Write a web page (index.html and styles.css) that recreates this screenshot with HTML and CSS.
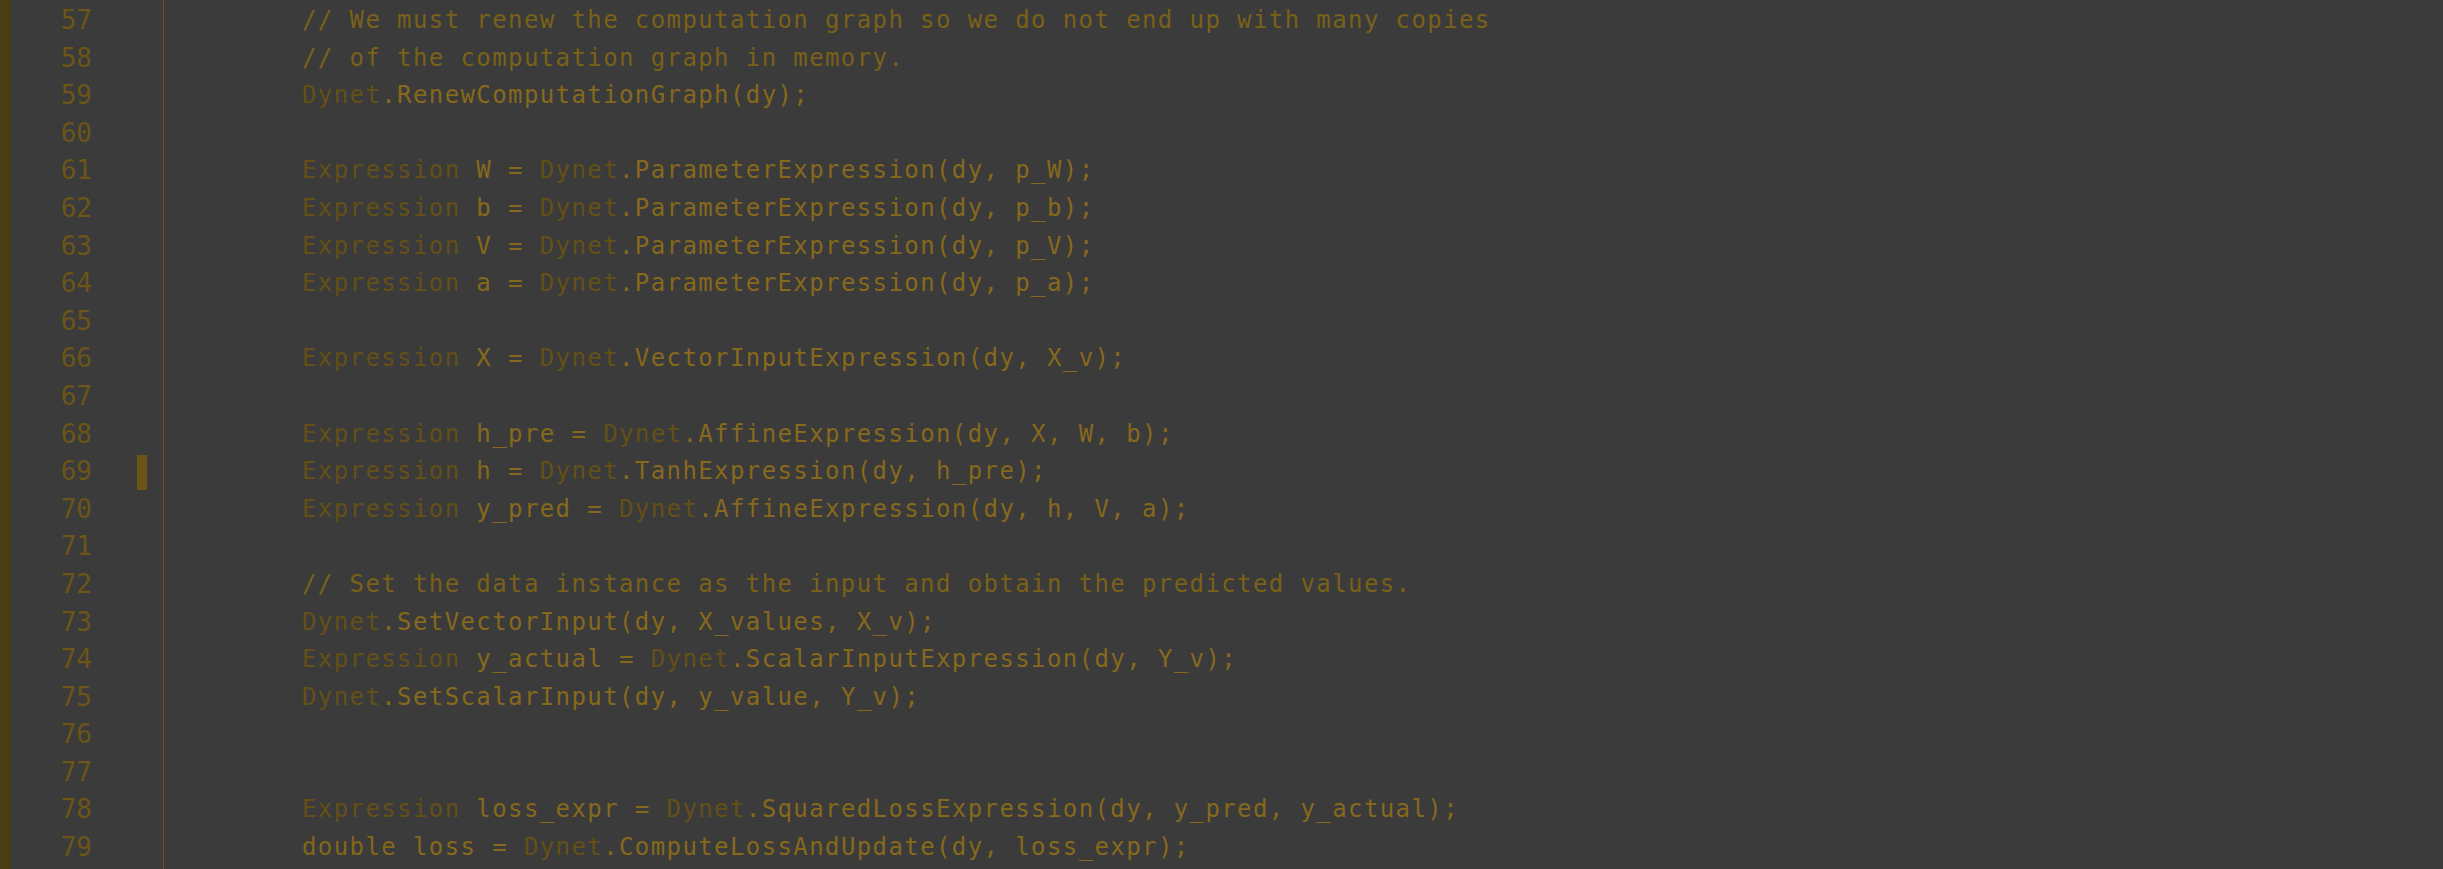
FILE: index.html
```html
<!DOCTYPE html>
<html>
<head>
<meta charset="utf-8">
<link rel="stylesheet" href="styles.css">
</head>
<body>
<div class="editor">
  <div class="stripe"></div>
  <div class="gutter">
    <div class="gl"><span class="num">57</span></div>
    <div class="gl"><span class="num">58</span></div>
    <div class="gl"><span class="num">59</span></div>
    <div class="gl"><span class="num">60</span></div>
    <div class="gl"><span class="num">61</span></div>
    <div class="gl"><span class="num">62</span></div>
    <div class="gl"><span class="num">63</span></div>
    <div class="gl"><span class="num">64</span></div>
    <div class="gl"><span class="num">65</span></div>
    <div class="gl"><span class="num">66</span></div>
    <div class="gl"><span class="num">67</span></div>
    <div class="gl"><span class="num">68</span></div>
    <div class="gl"><span class="num">69</span><span class="marker"></span></div>
    <div class="gl"><span class="num">70</span></div>
    <div class="gl"><span class="num">71</span></div>
    <div class="gl"><span class="num">72</span></div>
    <div class="gl"><span class="num">73</span></div>
    <div class="gl"><span class="num">74</span></div>
    <div class="gl"><span class="num">75</span></div>
    <div class="gl"><span class="num">76</span></div>
    <div class="gl"><span class="num">77</span></div>
    <div class="gl"><span class="num">78</span></div>
    <div class="gl"><span class="num">79</span></div>
  </div>
  <div class="code">
    <div class="ln"><span class="cm">// We must renew the computation graph so we do not end up with many copies</span></div>
    <div class="ln"><span class="cm">// of the computation graph in memory.</span></div>
    <div class="ln"><span class="ty">Dynet</span>.RenewComputationGraph(dy);</div>
    <div class="ln"></div>
    <div class="ln"><span class="ty">Expression</span> W = <span class="ty">Dynet</span>.ParameterExpression(dy, p_W);</div>
    <div class="ln"><span class="ty">Expression</span> b = <span class="ty">Dynet</span>.ParameterExpression(dy, p_b);</div>
    <div class="ln"><span class="ty">Expression</span> V = <span class="ty">Dynet</span>.ParameterExpression(dy, p_V);</div>
    <div class="ln"><span class="ty">Expression</span> a = <span class="ty">Dynet</span>.ParameterExpression(dy, p_a);</div>
    <div class="ln"></div>
    <div class="ln"><span class="ty">Expression</span> X = <span class="ty">Dynet</span>.VectorInputExpression(dy, X_v);</div>
    <div class="ln"></div>
    <div class="ln"><span class="ty">Expression</span> h_pre = <span class="ty">Dynet</span>.AffineExpression(dy, X, W, b);</div>
    <div class="ln"><span class="ty">Expression</span> h = <span class="ty">Dynet</span>.TanhExpression(dy, h_pre);</div>
    <div class="ln"><span class="ty">Expression</span> y_pred = <span class="ty">Dynet</span>.AffineExpression(dy, h, V, a);</div>
    <div class="ln"></div>
    <div class="ln"><span class="cm">// Set the data instance as the input and obtain the predicted values.</span></div>
    <div class="ln"><span class="ty">Dynet</span>.SetVectorInput(dy, X_values, X_v);</div>
    <div class="ln"><span class="ty">Expression</span> y_actual = <span class="ty">Dynet</span>.ScalarInputExpression(dy, Y_v);</div>
    <div class="ln"><span class="ty">Dynet</span>.SetScalarInput(dy, y_value, Y_v);</div>
    <div class="ln"></div>
    <div class="ln"></div>
    <div class="ln"><span class="ty">Expression</span> loss_expr = <span class="ty">Dynet</span>.SquaredLossExpression(dy, y_pred, y_actual);</div>
    <div class="ln"><span class="kw">double</span> loss = <span class="ty">Dynet</span>.ComputeLossAndUpdate(dy, loss_expr);</div>
  </div>
</div>
</body>
</html>
```

FILE: styles.css
```css
html, body {
  margin: 0;
  padding: 0;
  background: #3b3b3b;
  height: 100%;
  overflow: hidden;
}

.editor {
  display: flex;
  height: 869px;
  overflow: hidden;
}

.stripe {
  width: 11px;
  flex: 0 0 11px;
  background: #4b3d12;
}

.gutter {
  flex: 0 0 153px;
  box-sizing: border-box;
  border-right: 1px solid #6a5318;
  padding-top: 2px;
  font-family: "DejaVu Sans Mono", monospace;
  font-size: 26px;
  color: #6b5517;
}

.gl {
  display: grid;
  grid-template-columns: 81px 45px 10px;
  height: 37.6px;
  line-height: 37.6px;
}

.num {
  grid-column: 1;
  text-align: right;
}

.marker {
  grid-column: 3;
  background: #6b5416;
  margin: 2px 0 1px;
}

.code {
  flex: 1;
  padding-top: 2px;
  padding-left: 138px;
  font-family: "DejaVu Sans Mono", monospace;
  font-size: 24px;
  letter-spacing: 1.4px;
  color: #86691b;
}

.ln {
  height: 37.6px;
  line-height: 37.6px;
  white-space: pre;
}

.ty {
  color: #645016;
}

.cm {
  color: #7a6118;
}

.kw {
  color: #836719;
}
```
